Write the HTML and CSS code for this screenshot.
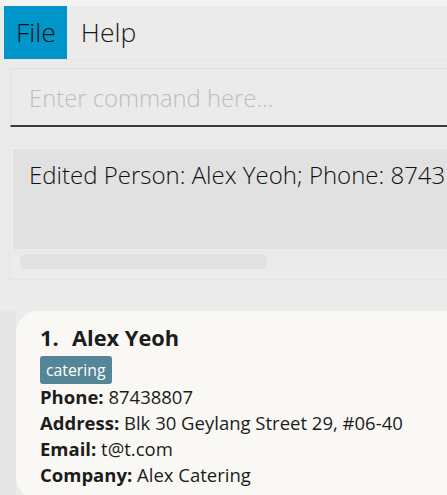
FILE: index.html
```html
<!DOCTYPE html>
<html>
<head>
<meta charset="utf-8">
<link rel="stylesheet" href="styles.css">
</head>
<body>
<div class="topstrip"></div>
<nav class="menubar">
  <div class="menu-item active">File</div>
  <div class="menu-item">Help</div>
</nav>
<section class="command-section">
  <div class="command-box">Enter command here...</div>
</section>
<section class="result-pane">
  <div class="result-text">Edited Person: Alex Yeoh; Phone: 8743</div>
  <div class="scroll-track"><div class="scroll-thumb"></div></div>
</section>
<section class="list-pane">
  <article class="card">
    <h2 class="name"><span class="idx">1.</span>Alex Yeoh</h2>
    <div class="tags"><span class="tag">catering</span></div>
    <p class="field"><b>Phone:</b> 87438807</p>
    <p class="field"><b>Address:</b> Blk 30 Geylang Street 29, #06-40</p>
    <p class="field"><b>Email:</b> t@t.com</p>
    <p class="field"><b>Company:</b> Alex Catering</p>
  </article>
</section>
</body>
</html>
```
FILE: styles.css
```css
html, body {
  margin: 0;
  padding: 0;
}
body {
  background: #ebebeb;
  font-family: "Open Sans", "Noto Sans", sans-serif;
  overflow: hidden;
  height: 495px;
}
.topstrip {
  height: 6px;
  background: #f3f3f3;
}
.menubar {
  display: flex;
  height: 53px;
  border-bottom: 1px solid #e4e4e4;
}
.menu-item {
  font-size: 26.5px;
  font-weight: 300;
  line-height: 52px;
  color: #1a1a1a;
  padding: 0 14px;
}
.menu-item.active {
  margin-left: 4px;
  background: #0096c9;
  padding: 0 11px 0 12px;
  color: #111;
}
.command-section {
  padding: 8px 0 0 10px;
}
.command-box {
  height: 56px;
  border-top: 1px solid #e1e1e1;
  border-left: 1px solid #e1e1e1;
  border-bottom: 2px solid #3b3b3b;
  background: #ebebeb;
  font-size: 23.8px;
  font-weight: 300;
  color: #bdbdbd;
  line-height: 58px;
  padding-left: 18px;
  white-space: nowrap;
}
.result-pane {
  margin: 18px 0 0 9px;
  height: 130px;
  border-top: 1px solid #e4e4e4;
  border-left: 1px solid #e4e4e4;
  border-bottom: 1px solid #e4e4e4;
  padding: 3px 0 0 3px;
}
.result-text {
  height: 100px;
  background: #e1e1e1;
  font-size: 24px;
  font-weight: 300;
  color: #111;
  white-space: nowrap;
  overflow: hidden;
  padding-left: 16px;
  line-height: 34px;
  padding-top: 9px;
  box-sizing: border-box;
}
.scroll-track {
  padding: 5px 0 0 7px;
}
.scroll-thumb {
  width: 247px;
  height: 15px;
  border-radius: 6px;
  background: #e1e1e1;
}
.list-pane {
  margin-top: 31px;
  padding-left: 16px;
  background: linear-gradient(to right, #e6e6e6 0, #e6e6e6 16px, #ebebeb 16px);
}
.card {
  background: #f9f8f5;
  border-radius: 22px 0 0 22px;
  padding: 12px 0 14px 24px;
  height: 188px;
  box-sizing: border-box;
  color: #1c1c1c;
}
.name {
  margin: 0;
  font-size: 21.8px;
  font-weight: 700;
  line-height: 30px;
}
.idx {
  display: inline-block;
  width: 32px;
}
.tags {
  margin-top: 3px;
  height: 28px;
}
.tag {
  display: inline-block;
  background: #548698;
  color: #fff;
  font-size: 15.8px;
  line-height: 28px;
  padding: 0 6px;
  border-radius: 3px;
}
.field {
  margin: 0;
  font-size: 18.5px;
  line-height: 26px;
  white-space: nowrap;
}
.field b {
  font-weight: 700;
}
```
